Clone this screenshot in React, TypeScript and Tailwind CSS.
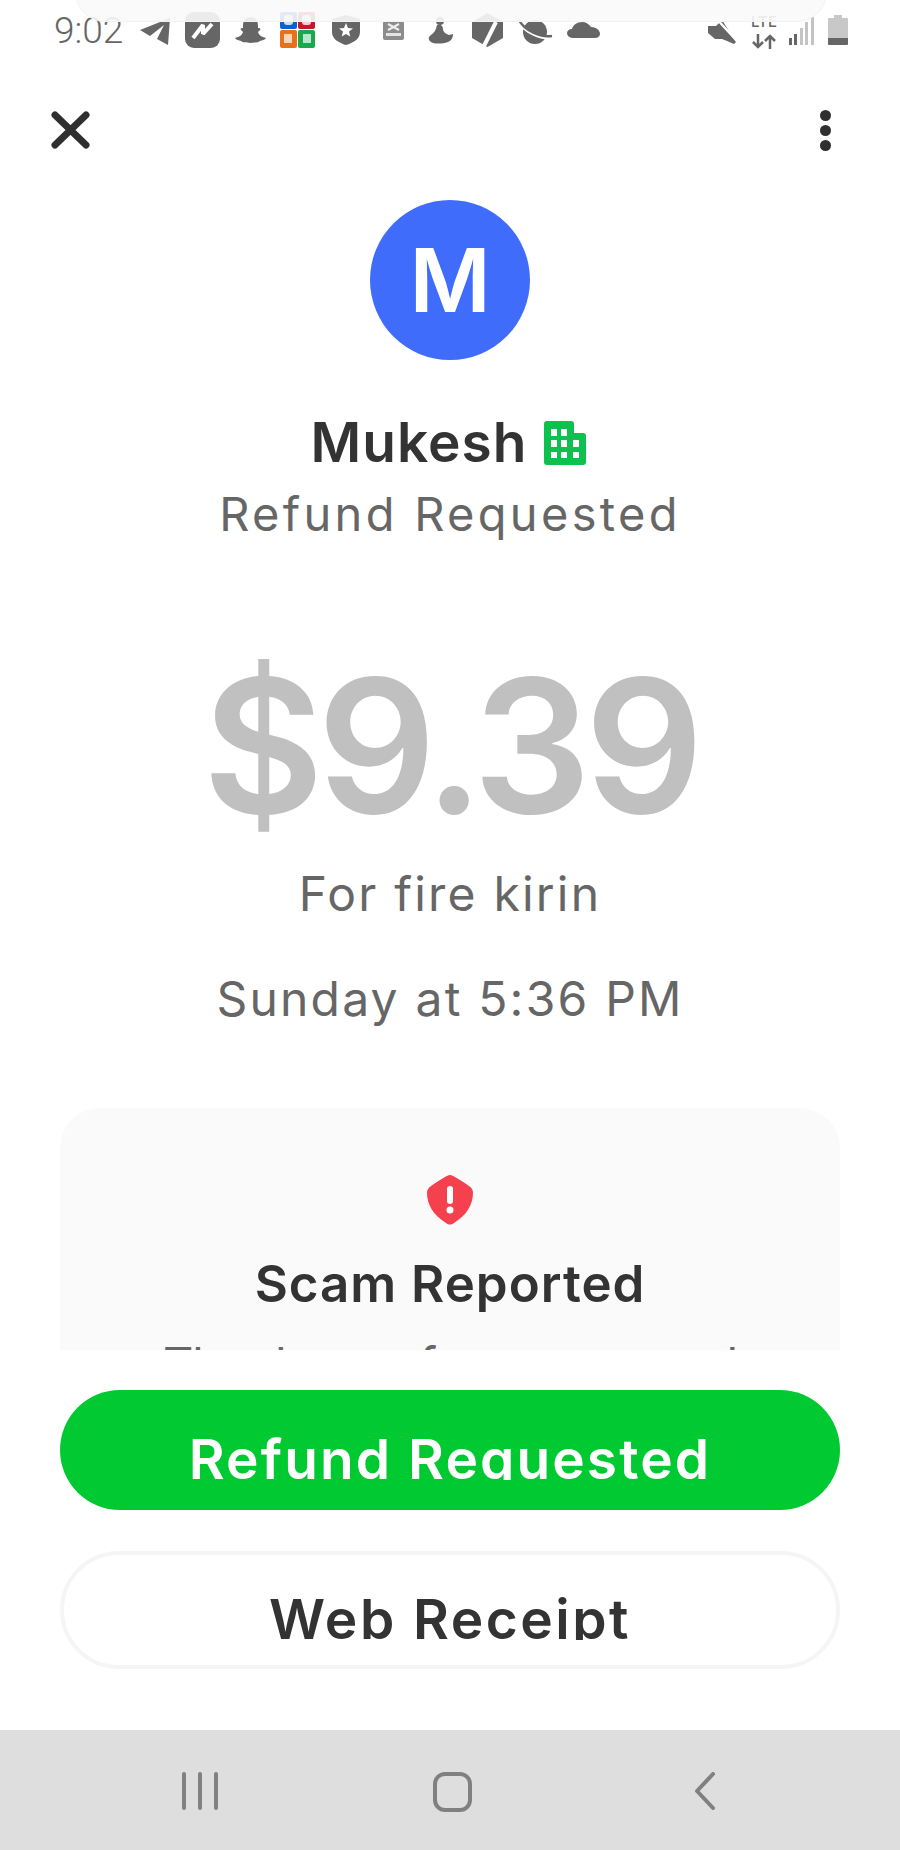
import React from 'react';

const Telegram = () => (
  <svg width="30" height="36" viewBox="0 0 30 36" fill="#666">
    <path d="M0 18 30 6 28 33 17 27 24 13 10 24Z" />
  </svg>
);

const Messenger = () => (
  <svg width="35" height="36" viewBox="0 0 35 36">
    <rect width="35" height="36" rx="9" fill="#666" />
    <path d="M8 26 18 13v9l9-10" fill="none" stroke="#fff" strokeWidth="4" strokeLinejoin="bevel" />
  </svg>
);

const Ghost = () => (
  <svg width="31" height="36" viewBox="0 0 31 36" fill="#666">
    <path d="M15.5 5C10 5 8 9 8 14v2c-2 0-3 1-2 2l2 2c-1 4-5 5-8 6 1 2 4 2 6 3 2 2 5 1 9.500 2 4.500-1 7.500 0 9.500-2 2-1 5-1 6-3-3-1-7-2-8-6l2-2c1-1 0-2-2-2v-2c0-5-2-9-7.500-9Z" />
  </svg>
);

const OfficeGrid = () => (
  <svg width="35" height="36" viewBox="0 0 35 36">
    <rect width="17" height="17" rx="2" fill="#0b62d6" />
    <rect x="18" width="17" height="17" rx="2" fill="#c9142c" />
    <rect y="18" width="17" height="18" rx="2" fill="#e8721c" />
    <rect x="18" y="18" width="17" height="18" rx="2" fill="#18a84e" />
    <rect x="4" y="3" width="9" height="10" rx="3" fill="#fff" opacity="0.8" />
    <rect x="22" y="3" width="9" height="10" rx="3" fill="#fff" opacity="0.8" />
    <rect x="4" y="22" width="8" height="9" fill="#fff" opacity="0.7" />
    <rect x="23" y="22" width="8" height="9" fill="#fff" opacity="0.7" />
  </svg>
);

const ShieldStar = () => (
  <svg width="28" height="36" viewBox="0 0 28 36">
    <path d="M14 3 28 7v13c0 7-7 11-14 13C7 31 0 27 0 20V7Z" fill="#666" />
    <path d="m14 11 2 5 5 .4-4 3.200 1.300 5L14 22l-4.300 2.600 1.300-5-4-3.200 5-.4Z" fill="#fff" />
  </svg>
);

const CryptoTile = () => (
  <svg width="21" height="36" viewBox="0 0 21 36">
    <rect y="9" width="21" height="19" rx="2" fill="#8c8c8c" />
    <path d="m5 12 11 6M16 12 5 18" stroke="#eee" strokeWidth="2" />
    <rect x="3" y="21" width="15" height="3" fill="#e4e4e4" />
  </svg>
);

const Figure = () => (
  <svg width="25" height="36" viewBox="0 0 25 36" fill="#666">
    <circle cx="12" cy="9" r="4" />
    <path d="M9 13c4-1 6 1 6 4 0 3 3 5 6 6l4-1c0 4-2 7-5 8-6 2-14 2-17 0-3-2-3-5 0-7 3-2 5-5 6-10Z" />
  </svg>
);

const HexSlash = () => (
  <svg width="31" height="36" viewBox="0 0 31 36">
    <path d="M15.500 1 31 10v16l-15.500 9L0 26V10Z" fill="#666" />
    <path d="M24 10 11 36" stroke="#fff" strokeWidth="4" />
  </svg>
);

const Planet = () => (
  <svg width="35" height="36" viewBox="0 0 35 36">
    <circle cx="17" cy="20" r="12" fill="#666" />
    <path d="M2 11c5 9 20 16 31 15" fill="none" stroke="#fff" strokeWidth="3" />
    <path d="M1 8c5 10 21 18 33 16" fill="none" stroke="#666" strokeWidth="2.500" />
  </svg>
);

const Cloud = () => (
  <svg width="33" height="36" viewBox="0 0 33 36" fill="#666">
    <path d="M7 26c-4 0-7-2-7-5 0-2 2-4 5-4 1-4 5-7 10-7 4 0 7 2 9 5 5 0 9 3 9 7 0 2-2 4-5 4Z" />
  </svg>
);

const Mute = () => (
  <svg width="29" height="36" viewBox="0 0 29 36">
    <path d="M0 14h8l6-6 14 22-2 2-7-3-5-2H7l-7-6Z" fill="#666" />
    <path d="m6 4 23 25" stroke="#fff" strokeWidth="2.500" />
  </svg>
);

const DataArrows = () => (
  <svg width="24" height="15" viewBox="0 0 24 15" fill="none" stroke="#666" strokeWidth="2.500">
    <path d="M6 0v13M1 8l5 5 5-5M18 15V2M13 7l5-5 5 5" />
  </svg>
);

const Signal = () => (
  <svg width="25" height="36" viewBox="0 0 25 36">
    <rect x="0" y="26" width="3" height="7" fill="#666" />
    <rect x="5" y="22" width="3" height="11" fill="#666" />
    <rect x="11" y="16" width="3" height="17" fill="#c4c4c4" />
    <rect x="16" y="10" width="3" height="23" fill="#c4c4c4" />
    <rect x="22" y="5" width="3" height="28" fill="#c4c4c4" />
  </svg>
);

const Battery = () => (
  <svg width="20" height="36" viewBox="0 0 20 36">
    <rect x="6" y="3" width="8" height="4" fill="#c8c8c8" />
    <rect y="6" width="20" height="22" rx="1" fill="#c8c8c8" />
    <path d="M0 26h20v6a1 1 0 0 1-1 1H1a1 1 0 0 1-1-1Z" fill="#666" />
  </svg>
);

const StatusBar = () => (
  <div className="mt-3 flex h-9 shrink-0 items-start justify-between pl-[54px] pr-[52px]">
    <div className="flex items-start">
      <span className="mt-[1px] mr-4 w-[70px] whitespace-nowrap text-[37px] leading-[36px] font-light text-[#666] [font-family:Roboto,sans-serif]">
        9:02
      </span>
      <div className="flex items-start">
        <Telegram />
        <div className="ml-[15px]"><Messenger /></div>
        <div className="ml-[15px]"><Ghost /></div>
        <div className="ml-[14px]"><OfficeGrid /></div>
        <div className="ml-[17px]"><ShieldStar /></div>
        <div className="ml-[23px]"><CryptoTile /></div>
        <div className="ml-[24px]"><Figure /></div>
        <div className="ml-[19px]"><HexSlash /></div>
        <div className="ml-[15px]"><Planet /></div>
        <div className="ml-[14px]"><Cloud /></div>
      </div>
    </div>
    <div className="flex items-start">
      <Mute />
      <div className="ml-[13px] flex w-[28px] flex-col items-center">
        <span className="mt-[3px] text-[15px] leading-[14px] font-medium text-[#666]">LTE</span>
        <div className="mt-[5px]"><DataArrows /></div>
      </div>
      <div className="ml-[11px]"><Signal /></div>
      <div className="ml-[14px]"><Battery /></div>
    </div>
  </div>
);

const Building = () => (
  <svg width="42" height="44" viewBox="0 0 42 44" className="ml-[17px]">
    <path d="M3 0h24a3 3 0 0 1 3 3v9h9a3 3 0 0 1 3 3v26a3 3 0 0 1-3 3H3a3 3 0 0 1-3-3V3a3 3 0 0 1 3-3Z" fill="#0cc14e" />
    <g fill="#fff">
      <rect x="7" y="8" width="6" height="7" />
      <rect x="17" y="8" width="6" height="7" />
      <rect x="7" y="19" width="6" height="7" />
      <rect x="17" y="19" width="6" height="7" />
      <rect x="29" y="19" width="6" height="7" />
      <rect x="7" y="31" width="6" height="6" />
      <rect x="17" y="31" width="6" height="6" />
      <rect x="29" y="31" width="6" height="6" />
    </g>
  </svg>
);

const AlertShield = () => (
  <svg width="46" height="50" viewBox="0 0 46 50" className="shrink-0">
    <path d="M23 0c2 0 3 1 5 2 5 3 10 6 14 9 3 2 4 4 4 7 0 11-6 22-19 30-3 2-5 2-8 0C6 40 0 29 0 18c0-3 1-5 4-7 4-3 9-6 14-9 2-1 3-2 5-2Z" fill="#f5404e" />
    <rect x="20" y="11" width="6" height="18" rx="3" fill="#fff" />
    <circle cx="23" cy="35" r="3.500" fill="#fff" />
  </svg>
);

export default function App() {
  return (
    <div className="relative flex h-[1850px] w-[900px] flex-col overflow-hidden bg-white [font-family:Inter,sans-serif]">
      <div className="absolute top-[-20px] left-[75px] z-10 h-[42px] w-[752px] rounded-b-[30px] border border-[#f2f2f2] bg-[#fafafa]/90" />

      <StatusBar />

      <div className="mt-[63px] flex h-[38px] shrink-0 items-center justify-between pl-[51px] pr-[69px]">
        <svg width="39" height="38" viewBox="0 0 39 38" fill="none" stroke="#2f2f2f" strokeWidth="7" strokeLinecap="round">
          <path d="m4 4 31 30M35 4 4 34" />
        </svg>
        <div className="flex flex-col gap-[4px]">
          <div className="size-[11px] rounded-full bg-[#2f2f2f]" />
          <div className="size-[11px] rounded-full bg-[#2f2f2f]" />
          <div className="size-[11px] rounded-full bg-[#2f2f2f]" />
        </div>
      </div>

      <div className="mt-[51px] flex size-[160px] shrink-0 items-center justify-center self-center rounded-full bg-[#3f6cfb]">
        <span className="text-[88px] leading-none font-semibold text-white">M</span>
      </div>

      <div className="mt-[55px] flex shrink-0 items-center justify-center pr-[3px]">
        <span className="text-[55px] leading-none font-semibold tracking-[1px] text-[#333]">Mukesh</span>
        <Building />
      </div>
      <p className="mt-5 text-center text-[47px] leading-none font-normal tracking-[3.3px] text-[#666]">Refund Requested</p>

      <p className="mt-[116px] text-center text-[186px] leading-none font-semibold tracking-[-6.5px] text-[#c0c0c0]">$9.39</p>
      <p className="mt-[31px] text-center text-[48px] leading-none font-normal tracking-[2.2px] text-[#666]">For fire kirin</p>
      <p className="mt-[57px] text-center text-[48px] leading-none font-normal tracking-[2.2px] text-[#666]">Sunday at 5:36 PM</p>

      <div className="mx-[60px] mt-[85px] flex h-[242px] shrink-0 flex-col items-center overflow-hidden rounded-t-[40px] bg-[#fafafa] pt-[67px]">
        <AlertShield />
        <p className="mt-[33px] shrink-0 text-[51px] leading-none font-semibold tracking-[1px] text-[#333]">Scam Reported</p>
        <p className="mt-[31px] shrink-0 text-[47px] leading-none font-normal tracking-[-1px] whitespace-nowrap text-[#666]">The donors for your record</p>
      </div>

      <div className="mx-[60px] mt-10 flex h-[120px] shrink-0 justify-center rounded-full bg-[#00c932] pt-[42px]">
        <span className="h-[48px] overflow-hidden text-[55px] leading-none font-semibold tracking-[2.1px] whitespace-nowrap text-white">Refund Requested</span>
      </div>

      <div className="mx-[60px] mt-[41px] flex h-[118px] shrink-0 justify-center rounded-full border-[4px] border-[#f5f5f5] bg-white pt-[37px]">
        <span className="h-[48px] overflow-hidden text-[55px] leading-none font-semibold tracking-[2.5px] whitespace-nowrap text-[#333]">Web Receipt</span>
      </div>

      <div className="mt-auto flex h-[120px] shrink-0 items-start bg-[#dedede] pt-[42px]">
        <div className="ml-[182px] flex h-[38px] gap-[12px]">
          <div className="h-full w-[4px] rounded-full bg-[#808080]" />
          <div className="h-full w-[4px] rounded-full bg-[#808080]" />
          <div className="h-full w-[4px] rounded-full bg-[#808080]" />
        </div>
        <div className="ml-[215px] h-[40px] w-[39px] rounded-[12px] border-[4px] border-[#808080]" />
        <svg width="22" height="38" viewBox="0 0 22 38" fill="none" stroke="#808080" strokeWidth="4" strokeLinecap="round" strokeLinejoin="round" className="ml-[222px]">
          <path d="M19 2 3 19l16 17" />
        </svg>
      </div>
    </div>
  );
}
